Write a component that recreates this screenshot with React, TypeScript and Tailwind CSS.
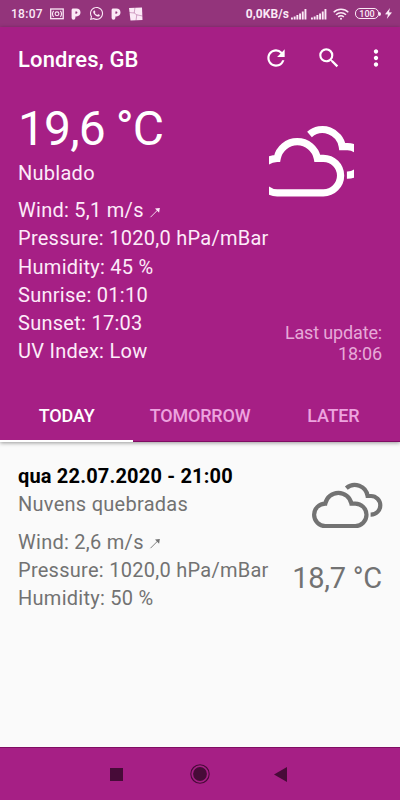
import React, { useState } from "react";
import { MdMoreVert, MdRefresh, MdSearch } from "react-icons/md";
import { FaWhatsapp } from "react-icons/fa";

const tabs = ["TODAY", "TOMORROW", "LATER"];
const signalBars = [2, 3, 4.5, 6, 8, 10.5];

const Clouds = ({ viewBox, strokeWidth, className }: { viewBox: string; strokeWidth: number; className: string }) => (
  <svg viewBox={viewBox} className={className} fill="none" stroke="currentColor" strokeWidth={strokeWidth}>
    <path d="M13.3 44H43.3A11.2 11.2 0 0 0 43.3 21.6H39.4A13.3 13.3 0 0 0 13.3 21.6A11.2 11.2 0 0 0 13.3 44Z" />
    <path d="M34.3 6.1A13 13 0 0 1 55.6 14H59A9.3 9.3 0 0 1 59 32.6H58.6" />
  </svg>
);

const WindArrow = () => (
  <svg viewBox="0 0 12 12" className="inline-block h-3 w-3" fill="none" stroke="currentColor" strokeWidth="0.9">
    <path d="M1.5 11.2 10 2.7" />
    <path d="M6 2.6 10.8 1.9 10.1 6.7Z" fill="currentColor" stroke="none" />
  </svg>
);

const Signal = () => (
  <svg viewBox="0 0 16 12" className="h-3 w-4" fill="currentColor">
    {signalBars.map((h, i) => (
      <rect key={i} x={i * 2.7} y={11.5 - h} width="1.9" height={h} />
    ))}
  </svg>
);

const PIcon = () => (
  <svg viewBox="0 0 10 12" className="h-3 w-2.5" fill="currentColor">
    <path
      fillRule="evenodd"
      d="M2.2.6H5.4C8 .6 9.5 2.2 9.5 4.5S8 8.4 5.4 8.4H4.4V9.8A1.9 1.9 0 0 1 .6 9.8V2.2C.6 1.2 1.2.6 2.2.6ZM4.4 3.4V5.8H5.2C6 5.8 6.4 5.3 6.4 4.6S6 3.4 5.2 3.4Z"
    />
  </svg>
);

const StatusBar = () => (
  <div className="flex h-[27px] items-center bg-[#93347b] text-[#fbe9f6]">
    <span className="ml-[11px] w-[33px] text-[12px] leading-none font-medium tracking-[0.3px]">18:07</span>
    <svg viewBox="0 0 14 12" className="ml-1.5 h-3 w-3.5" fill="none" stroke="currentColor" strokeWidth="1.1">
      <rect x="0.7" y="1" width="12.5" height="9.7" strokeWidth="1.3" />
      <circle cx="7" cy="5.8" r="1.9" />
      <path d="M3.6 2.8A5 5 0 0 0 3.6 8.8M10.4 2.8A5 5 0 0 1 10.4 8.8" />
    </svg>
    <div className="ml-[7px]">
      <PIcon />
    </div>
    <FaWhatsapp className="ml-2 h-[15px] w-[15px]" />
    <div className="ml-[7px]">
      <PIcon />
    </div>
    <svg viewBox="0 0 14 14" className="ml-2 h-3.5 w-3.5">
      <path d="M0 1 13 0.5 13.5 13 1.5 13.5Z" fill="currentColor" />
      <path d="M6 0.5 5.2 6 7.8 7.8 7 13.5M0 5.5 5.2 6M7.8 7.8 13.5 9" stroke="#93347b" strokeWidth="0.4" fill="none" />
    </svg>
    <div className="ml-auto flex items-center pr-2">
      <span className="mr-0.5 text-[12px] leading-none font-bold tracking-[0.1px]">0,0KB/s</span>
      <Signal />
      <div className="ml-1">
        <Signal />
      </div>
      <svg viewBox="0 0 16 12" className="ml-1.5 h-3 w-4" fill="none" stroke="currentColor" strokeWidth="1.5">
        <path d="M.7 4.3A10.5 10.5 0 0 1 15.3 4.3M3 6.7A7.2 7.2 0 0 1 13 6.7M5.2 9A4 4 0 0 1 10.8 9" />
        <circle cx="8" cy="10.7" r="1" fill="currentColor" stroke="none" />
      </svg>
      <span className="ml-1.5 flex h-[11px] w-6 items-center justify-center rounded-[5px] border border-[#fbe9f6] pt-px text-[9px] leading-none font-medium">
        100
      </span>
      <span className="h-1 w-0.5 rounded-r bg-[#fbe9f6]" />
      <svg viewBox="0 0 7 11" className="ml-1 h-[11px] w-[7px]" fill="currentColor">
        <path d="M5 0 0 6.2 3 6.5 1.8 11 7 4.6 4 4.3Z" />
      </svg>
    </div>
  </div>
);

const App = () => {
  const [active, setActive] = useState("TODAY");

  return (
    <div className="flex h-[800px] w-[400px] flex-col overflow-hidden bg-[#fafafa] font-['Roboto',sans-serif]">
      <StatusBar />

      {/* current weather */}
      <div className="relative flex h-[415px] flex-none flex-col bg-[#a61f85] text-[#fdebf9] shadow-[0_1px_4px_rgba(0,0,0,0.4)]">
        <div className="flex h-16 items-center pl-[18px] text-white">
          <h1 className="pt-0.5 text-[22px] leading-none font-medium tracking-[0.15px]">Londres, GB</h1>
          <MdRefresh className="-mt-0.5 ml-auto h-[26px] w-[26px]" />
          <MdSearch className="-mt-0.5 ml-[27px] h-[26px] w-[26px]" />
          <MdMoreVert className="-mt-0.5 mr-[11.5px] ml-[21px] h-[26px] w-[26px]" />
        </div>
        <div className="flex h-[285px] justify-between px-[18px]">
          <div className="whitespace-nowrap">
            <p className="mt-2 text-[48px] leading-[60px] tracking-[-0.9px] text-white">19,6 °C</p>
            <p className="text-[20px] leading-7 tracking-[0.27px]">Nublado</p>
            <div className="mt-[9px] text-[20px] leading-[28.3px] tracking-[0.27px]">
              <p>Wind: 5,1 m/s <WindArrow /></p>
              <p>Pressure: 1020,0 hPa/mBar</p>
              <p>Humidity: 45 %</p>
              <p>Sunrise: 01:10</p>
              <p>Sunset: 17:03</p>
              <p>UV Index: Low</p>
            </div>
          </div>
          <div className="flex flex-col items-end">
            <Clouds viewBox="8 0 55.2 46.75" strokeWidth={4.7} className="mt-[34px] mr-7 h-[72px] w-[85px] flex-none text-white" />
            <p className="mt-[125px] -ml-12 text-right text-[18px] leading-[21px] tracking-[-0.15px] whitespace-nowrap text-[#e6a9d8]">
              Last update:
              <br />
              18:06
            </p>
          </div>
        </div>
        <div className="grid flex-1 grid-cols-3 border-b border-[#7f0d62]">
          {tabs.map((tab) => (
            <button
              key={tab}
              onClick={() => setActive(tab)}
              className={`-mb-px border-b-2 pt-[15px] text-[18px] font-medium tracking-[-0.2px] ${
                active === tab ? "border-white text-white" : "border-transparent text-[#eda3df]"
              }`}
            >
              {tab}
            </button>
          ))}
        </div>
      </div>

      {/* forecast list */}
      <div className="flex flex-1 justify-between px-[18px] text-[20px] leading-[28.3px] tracking-[0.27px] text-[#727272]">
        <div className="pt-5 whitespace-nowrap">
          <p className="font-bold tracking-[0.18px] text-black">qua 22.07.2020 - 21:00</p>
          <p>Nuvens quebradas</p>
          <div className="mt-[9px]">
            <p>Wind: 2,6 m/s <WindArrow /></p>
            <p>Pressure: 1020,0 hPa/mBar</p>
            <p>Humidity: 50 %</p>
          </div>
        </div>
        <div className="-ml-6 flex flex-col items-end">
          <Clouds viewBox="0 0 71 47" strokeWidth={4.2} className="mt-10 -mr-px h-[47px] w-[71px] flex-none" />
          <p className="mt-8 text-[29px] leading-[34px] tracking-[-0.25px] whitespace-nowrap">18,7 °C</p>
        </div>
      </div>

      {/* navigation bar */}
      <div className="flex h-[53px] items-center border-t border-[#7f0d62] bg-[#a61f85] text-[#470b38]">
        <span className="ml-[110px] h-[13px] w-[13px] bg-[#470b38]" />
        <svg viewBox="0 0 20 20" className="ml-[67px] h-5 w-5">
          <circle cx="10" cy="10" r="9.2" fill="none" stroke="currentColor" strokeWidth="1.1" />
          <circle cx="10" cy="10" r="6.9" fill="currentColor" />
        </svg>
        <svg viewBox="0 0 13 15" className="ml-16 h-[15px] w-[13px]" fill="currentColor">
          <path d="M13 0V15L0 7.5Z" />
        </svg>
      </div>
    </div>
  );
};

export default App;
